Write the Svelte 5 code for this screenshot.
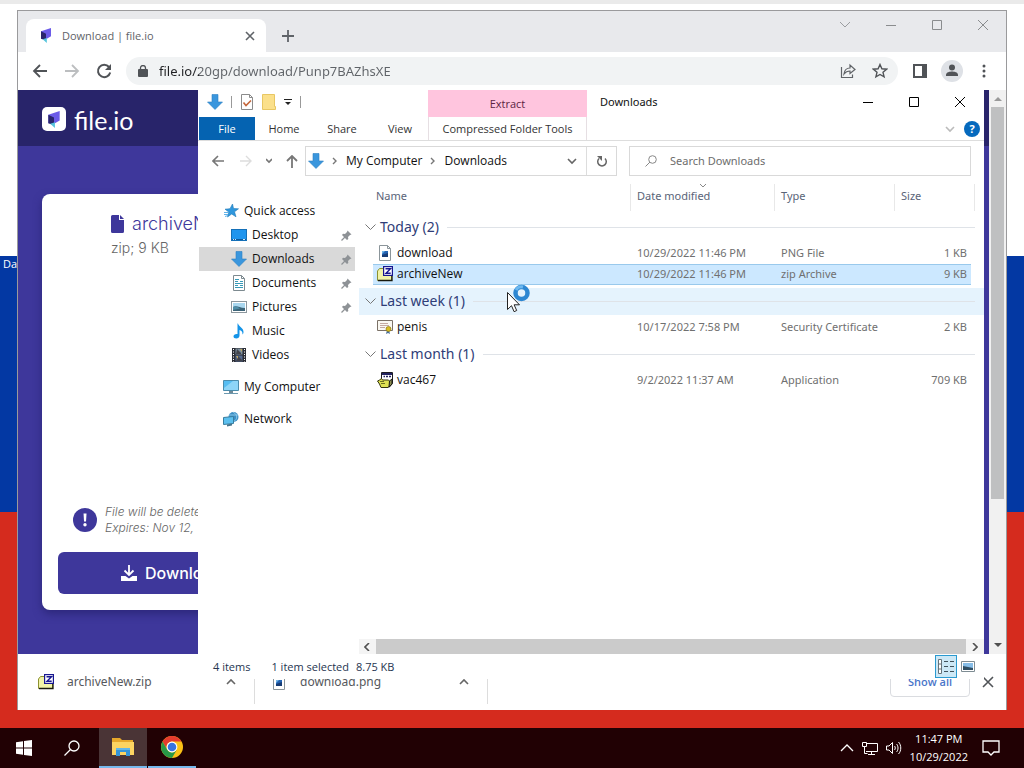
<script lang="ts">
    type FileRow = { name: string; icon: string; date: string; type: string; size: string; selected?: boolean };
    type Group = { title: string; hover?: boolean; files: FileRow[] };

    const groups: Group[] = [
        {
            title: 'Today (2)',
            files: [
                { name: 'download', icon: 'image', date: '10/29/2022 11:46 PM', type: 'PNG File', size: '1 KB' },
                { name: 'archiveNew', icon: 'zip', date: '10/29/2022 11:46 PM', type: 'zip Archive', size: '9 KB', selected: true },
            ],
        },
        {
            title: 'Last week (1)',
            hover: true,
            files: [{ name: 'penis', icon: 'cert', date: '10/17/2022 7:58 PM', type: 'Security Certificate', size: '2 KB' }],
        },
        {
            title: 'Last month (1)',
            files: [{ name: 'vac467', icon: 'app', date: '9/2/2022 11:37 AM', type: 'Application', size: '709 KB' }],
        },
    ];

    const quickLinks = [
        { name: 'Desktop', icon: 'desktop', pinned: true },
        { name: 'Downloads', icon: 'down', pinned: true, current: true },
        { name: 'Documents', icon: 'doc', pinned: true },
        { name: 'Pictures', icon: 'picture', pinned: true },
        { name: 'Music', icon: 'music' },
        { name: 'Videos', icon: 'video' },
    ];

    let url = $state('file.io/20gp/download/Punp7BAZhsXE');
    let search = $state('');
</script>

{#snippet icon(name: string)}
    <svg class="icon" width="16" height="16" viewBox="0 0 16 16" aria-hidden="true">
        {#if name === 'down'}
            <path d="M5 .5h6v7.500h4.500L8 15.500.5 8H5z" fill="#3a96dd" stroke="#2b7fc4" stroke-width=".6" />
        {:else if name === 'desktop'}
            <rect x=".5" y="2.500" width="15" height="11" fill="#1f95ee" stroke="#1470b8" />
            <path d="M1 12.500h14" stroke="#0b5a9c" /><path d="M2 12.500h1m1 0h1m7 0h2" stroke="#cdeaff" />
        {:else if name === 'doc'}
            <path d="M2.500.5h8l3 3v12h-11z" fill="#fff" stroke="#7d8a90" />
            <path d="M10.500.5v3h3" fill="none" stroke="#7d8a90" />
            <path d="M4 4.500h4M4 6.500h3m2 0h3M4 8.500h8M4 10.500h3m2 0h3M4 12.500h8" stroke="#389ab8" />
        {:else if name === 'picture'}
            <rect x=".5" y="2.500" width="15" height="11" fill="#fff" stroke="#8c979d" />
            <path d="M2 4h12v8H2z" fill="#a9d7ef" /><path d="M2 8c4-2 6 1 12 1v3H2z" fill="#3c6478" /><path d="M2 8c3-1 5 0 7 1.500L2 11z" fill="#4f8ea8" />
        {:else if name === 'music'}
            <path d="M7 .5c.5 3 6 4.500 5.500 9-.2 1-.5 1.500-1 2 .3-3-1.500-4-3-4.500v5.500c0 2-1.500 3-3.200 3S2.500 14.500 2.500 13.200 4 10.700 6.500 11V.5z" fill="#1494e8" />
        {:else if name === 'video'}
            <path d="M1 1h14v14H1z" fill="#2b2d35" /><path d="M4.500 1.500h7v6h-7z" fill="#7c8f9d" /><path d="M4.500 8.500h7v6h-7z" fill="#566b91" />
            <path d="M6 2l4 4v1H5zM7 9l4 4v1H5z" fill="#42434b" /><path d="M9 2h2v3zM5 9h2v3z" fill="#c4a860" />
            <path d="M2.500 2v13M13.500 2v13" stroke="#fff" stroke-dasharray="1 1.500" />
        {:else if name === 'star'}
            <path d="M9.500 1l1 4.500 5 .3-4 3 1.500 5L8.700 11l-4.200 3 1.300-5L2 6.200l5-.5z" fill="#2f97dd" stroke="#1e78b7" stroke-width=".6" />
            <path d="M1 9.500h4m-4 2h4m-3 2l3-1" stroke="#5fb2ea" />
        {:else if name === 'computer'}
            <path d="M.5 1.500h15v10H.5z" fill="#56bdf2" stroke="#4b8cac" /><path d="M1 9L10 2h5v9H1z" fill="#8dd5f8" />
            <path d="M6 12h4v2H6z" fill="#6e8996" /><path d="M1 14.500h14" stroke="#6c99b0" />
        {:else if name === 'network'}
            <circle cx="10.500" cy="6" r="5" fill="#3b8ec5" /><path d="M10 1c5 3 5 7 0 10M6 4h9" fill="none" stroke="#9dd6ef" stroke-width=".8" />
            <path d="M.5 6.500l10-1v7l-10 1z" fill="#5cc0ef" stroke="#387d9f" /><path d="M4 13.500l5-1v2l-5 1z" fill="#47758d" />
        {:else if name === 'image'}
            <path d="M2.500.5h8l3 3v12h-11z" fill="#fff" stroke="#8b959a" /><path d="M10.500.5v3h3" fill="none" stroke="#8b959a" />
            <path d="M5 6h6v6H5z" fill="#2464b4" /><path d="M5 10l6-2v4H5z" fill="#173c75" /><path d="M5 6h3L5 9z" fill="#73b6e6" />
        {:else if name === 'zip'}
            <path d="M.5 5l2-2.500h4l1 2h7v10H.5z" fill="#f1f4a8" stroke="#8d9130" /><path d="M1 14.500h14V9" fill="none" stroke="#17180c" stroke-width="1.300" />
            <rect x="6.600" y=".6" width="8.800" height="8.800" fill="#fff" stroke="#171790" stroke-width="1.200" />
            <path d="M8.500 2.700h5L9 7.300h4.700" fill="none" stroke="#171790" stroke-width="1.400" />
        {:else if name === 'cert'}
            <path d="M.5 1.500h15v10H.5z" fill="#faf8f2" stroke="#7b7167" /><path d="M3 4.500h8M3 6.500h9M3 8.500h5" stroke="#c5aaa2" />
            <path d="M10 11l-1 4 2-1 2 1-1-4z" fill="#486d98" /><circle cx="11.500" cy="10" r="2.500" fill="#d8bd21" stroke="#8f7912" stroke-width=".7" />
        {:else if name === 'app'}
            <path d="M4.500.5h11v11l-3 3.500h-8z" fill="#fff" stroke="#1c1c22" /><path d="M5 1h10v2H5z" fill="#22225f" />
            <path d="M6.500 4.500h1.500m1 0h2m1 0h2" stroke="#22225f" stroke-width="1.400" />
            <path d="M.5 9l2-1 2-1.500 1 1.500h6l1 1v5l-1.500 1.500h-7L2.500 12z" fill="#dfe253" stroke="#34350e" />
            <path d="M3 9.500h4m-3 2h4" stroke="#6c6e20" /><path d="M12.500 9l2.500-2v5l-3 3z" fill="#8a8c50" stroke="#1c1c12" />
        {/if}
    </svg>
{/snippet}

{#snippet chevron(dir: string)}
    <svg class="chev {dir}" width="10" height="10" viewBox="0 0 10 10" aria-hidden="true"><path d="M1 3l4 4 4-4" /></svg>
{/snippet}

{#snippet logo()}
    <svg class="logo" viewBox="0 0 14 18" aria-hidden="true">
        <path d="M1 4l12-4v10L8 13H1z" fill="#6b5be8" /><path d="M1 4l6 3v8l-6-2z" fill="#29256c" /><path d="M3 13.500l5-1.500v6z" fill="#56c4dc" />
    </svg>
{/snippet}

<div class="screen">
    <div class="desktop">
        <div class="stripe white"></div>
        <div class="stripe blue"><span class="shortcut">Da</span></div>
        <div class="stripe red"></div>

        <section class="browser" aria-label="Browser">
            <div class="tabstrip">
                <div class="tab">
                    {@render logo()}
                    <span class="tab-title">Download | file.io</span>
                    <button class="plain" aria-label="Close tab"><svg width="10" height="10" viewBox="0 0 10 10"><path d="M1 1l8 8M9 1L1 9" stroke="#5f6368" stroke-width="1.600" /></svg></button>
                </div>
                <button class="plain new-tab" aria-label="New tab"><svg width="12" height="12" viewBox="0 0 12 12"><path d="M6 0v12M0 6h12" stroke="#5f6368" stroke-width="1.800" /></svg></button>
                <div class="controls">
                    <button class="plain" aria-label="Search tabs"><svg width="12" height="12" viewBox="0 0 12 12"><path d="M1 3l5 5 5-5" fill="none" stroke="#9b9da0" /></svg></button>
                    <button class="plain" aria-label="Minimize"><svg width="12" height="12" viewBox="0 0 12 12"><path d="M1 6.500h10" stroke="#8a8c8e" /></svg></button>
                    <button class="plain" aria-label="Maximize"><svg width="12" height="12" viewBox="0 0 12 12"><path d="M1.500 1.500h9v9h-9z" fill="none" stroke="#8a8c8e" /></svg></button>
                    <button class="plain" aria-label="Close"><svg width="12" height="12" viewBox="0 0 12 12"><path d="M1 1l10 10M11 1L1 11" stroke="#8a8c8e" /></svg></button>
                </div>
            </div>

            <div class="toolbar">
                <button class="plain" aria-label="Back"><svg width="16" height="16" viewBox="0 0 16 16"><path d="M15 8H2m6-6L2 8l6 6" fill="none" stroke="#505357" stroke-width="1.800" /></svg></button>
                <button class="plain" aria-label="Forward"><svg width="16" height="16" viewBox="0 0 16 16"><path d="M1 8h13M8 2l6 6-6 6" fill="none" stroke="#bcbec0" stroke-width="1.800" /></svg></button>
                <button class="plain" aria-label="Reload"><svg width="16" height="16" viewBox="0 0 16 16"><path d="M13 4a6.200 6.200 0 1 0 1.200 5.500" fill="none" stroke="#505357" stroke-width="2" /><path d="M15 1v6H9z" fill="#505357" /></svg></button>
                <label class="omnibox">
                    <svg width="10" height="12" viewBox="0 0 10 12" aria-hidden="true"><rect y="4" width="10" height="8" rx="1" fill="#505357" /><path d="M2.500 5V3a2.500 2.500 0 0 1 5 0v2" fill="none" stroke="#505357" stroke-width="1.300" /></svg>
                    <input aria-label="Address" bind:value={url} />
                    <svg width="16" height="16" viewBox="0 0 16 16" aria-hidden="true"><path d="M1.500 4v10.500h11v-3M4 11c.5-4 3-6 6-6V2l5 4.500-5 4V8c-3 0-4.500 1-6 3z" fill="none" stroke="#606367" stroke-width="1.200" /></svg>
                    <svg width="16" height="16" viewBox="0 0 16 16" aria-hidden="true"><path d="M8 1.500l1.900 4.300 4.700.4-3.600 3.100 1.100 4.600L8 11.500l-4.100 2.400L5 9.300 1.400 6.200l4.700-.4z" fill="none" stroke="#505357" stroke-width="1.400" /></svg>
                </label>
                <button class="plain" aria-label="Side panel"><svg width="16" height="16" viewBox="0 0 16 16"><path d="M2 2h12v12H2z" fill="none" stroke="#505357" stroke-width="2" /><path d="M10 2h5v12h-5z" fill="#505357" /></svg></button>
                <button class="plain profile" aria-label="Profile"><svg width="22" height="22" viewBox="0 0 22 22"><circle cx="11" cy="11" r="11" fill="#dee1e6" /><circle cx="11" cy="7.500" r="3" fill="#505357" /><path d="M5 16v-1c0-3 4-3.500 6-3.500s6 .5 6 3.500v1z" fill="#505357" /></svg></button>
                <button class="plain" aria-label="Menu"><svg width="16" height="16" viewBox="0 0 16 16"><g fill="#505357"><circle cx="8" cy="3" r="1.500" /><circle cx="8" cy="8" r="1.500" /><circle cx="8" cy="13" r="1.500" /></g></svg></button>
            </div>

            <div class="viewport">
                <main class="page">
                    <header class="page-head">
                        <span class="badge">{@render logo()}</span>
                        <span class="brand">file.io</span>
                    </header>
                    <div class="card">
                        <div class="file-info">
                            <svg width="13" height="18" viewBox="0 0 13 18" aria-hidden="true"><path d="M1.500 0H8v5h5v11.500a1.500 1.500 0 0 1-1.500 1.500h-10A1.500 1.500 0 0 1 0 16.500v-15A1.500 1.500 0 0 1 1.500 0zM9 0l4 4H9z" fill="#3e379b" /></svg>
                            <span class="file-name">archiveNew</span>
                            <span class="file-meta">zip; 9 KB</span>
                        </div>
                        <div class="notice">
                            <svg width="24" height="24" viewBox="0 0 24 24" aria-hidden="true"><circle cx="12" cy="12" r="12" fill="#3e379b" /><path d="M10.500 5.500h3l-.5 8h-2z" fill="#fff" /><circle cx="12" cy="16.800" r="1.700" fill="#fff" /></svg>
                            <p>File will be deleted<br />Expires: Nov 12,</p>
                        </div>
                        <button class="download">
                            <svg width="16" height="16" viewBox="0 0 16 16" aria-hidden="true"><path d="M8 0v10M3.500 5.500L8 10l4.500-4.500" fill="none" stroke="#fff" stroke-width="1.800" /><path d="M0 11h4.500L8 13.500l3.500-2.500H16v5H0z" fill="#fff" /></svg>
                            Download
                        </button>
                    </div>
                </main>
                <div class="vscroll">
                    <svg width="8" height="6" viewBox="0 0 8 6" aria-hidden="true"><path d="M0 5l4-4 4 4z" fill="#9a9a9a" /></svg>
                    <div class="track"><div class="thumb"></div></div>
                    <svg width="8" height="6" viewBox="0 0 8 6" aria-hidden="true"><path d="M0 1l4 4 4-4z" fill="#505050" /></svg>
                </div>
            </div>

            <footer class="shelf">
                <div class="item">{@render icon('zip')}<span>archiveNew.zip</span><button class="plain" aria-label="Options">{@render chevron('up')}</button></div>
                <div class="item">{@render icon('image')}<span>download.png</span><button class="plain" aria-label="Options">{@render chevron('up')}</button></div>
                <button class="show-all">Show all</button>
                <button class="plain" aria-label="Close downloads"><svg width="12" height="12" viewBox="0 0 12 12"><path d="M1 1l10 10M11 1L1 11" stroke="#505357" stroke-width="1.600" /></svg></button>
            </footer>
        </section>

        <section class="explorer" aria-label="Downloads">
            <div class="titlebar">
                <div class="quick">
                    {@render icon('down')}
                    <i class="sep"></i>
                    <svg width="14" height="16" viewBox="0 0 14 16" aria-hidden="true"><path d="M1.500.5h8l3 3v12h-11z" fill="#fff" stroke="#8b8b8b" /><path d="M9.500.5v3h3" fill="none" stroke="#8b8b8b" /><path d="M3.500 8.500l2.500 3 5-5" fill="none" stroke="#c5663a" stroke-width="1.600" /></svg>
                    <svg width="14" height="16" viewBox="0 0 14 16" aria-hidden="true"><path d="M.5.5h12v12h1v3H.5z" fill="#fbe08b" stroke="#e8c763" /></svg>
                    <svg width="8" height="8" viewBox="0 0 8 8" aria-hidden="true"><path d="M0 1.500h8" stroke="#222" /><path d="M1 4h6L4 7z" fill="#222" /></svg>
                    <i class="sep"></i>
                </div>
                <div class="context">Extract</div>
                <h1>Downloads</h1>
                <div class="controls">
                    <button class="plain" aria-label="Minimize"><svg width="12" height="12" viewBox="0 0 12 12"><path d="M1 6.500h10" stroke="#000" /></svg></button>
                    <button class="plain" aria-label="Maximize"><svg width="12" height="12" viewBox="0 0 12 12"><path d="M1.500 1.500h9v9h-9z" fill="none" stroke="#000" /></svg></button>
                    <button class="plain" aria-label="Close"><svg width="12" height="12" viewBox="0 0 12 12"><path d="M1 1l10 10M11 1L1 11" stroke="#000" /></svg></button>
                </div>
            </div>

            <nav class="ribbon">
                <button class="file">File</button>
                <button>Home</button>
                <button>Share</button>
                <button>View</button>
                <button class="tools">Compressed Folder Tools</button>
                <span class="ribbon-end">
                    {@render chevron('down pale')}
                    <button class="help" aria-label="Help">?</button>
                </span>
            </nav>

            <div class="navbar">
                <div class="arrows">
                    <button class="plain" aria-label="Back"><svg width="13" height="12" viewBox="0 0 13 12"><path d="M12 6H1m5-5L1 6l5 5" fill="none" stroke="#777" stroke-width="1.600" /></svg></button>
                    <button class="plain" aria-label="Forward"><svg width="13" height="12" viewBox="0 0 13 12"><path d="M1 6h11M7 1l5 5-5 5" fill="none" stroke="#ddd" stroke-width="1.400" /></svg></button>
                    <button class="plain" aria-label="Recent"><svg width="6" height="6" viewBox="0 0 6 6"><path d="M0 1l3 3 3-3" fill="none" stroke="#777" stroke-width="1.600" /></svg></button>
                    <button class="plain" aria-label="Up"><svg width="12" height="13" viewBox="0 0 12 13"><path d="M6 13V1M1 6l5-5 5 5" fill="none" stroke="#777" stroke-width="1.800" /></svg></button>
                </div>
                <div class="address">
                    {@render icon('down')}
                    <svg width="6" height="8" viewBox="0 0 6 8" aria-hidden="true"><path d="M1 1l3 3-3 3" fill="none" stroke="#777" stroke-width="1.400" /></svg>
                    <a href="#computer">My Computer</a>
                    <svg width="6" height="8" viewBox="0 0 6 8" aria-hidden="true"><path d="M1 1l3 3-3 3" fill="none" stroke="#777" stroke-width="1.400" /></svg>
                    <a href="#downloads">Downloads</a>
                    <button class="plain expand" aria-label="Previous locations">{@render chevron('down')}</button>
                    <button class="plain refresh" aria-label="Refresh"><svg width="12" height="12" viewBox="0 0 12 12"><path d="M3 3.500a4.300 4.300 0 1 0 6 0" fill="none" stroke="#666" stroke-width="1.500" /><path d="M1 1h5v5z" fill="#666" /></svg></button>
                </div>
                <label class="search">
                    <svg width="12" height="12" viewBox="0 0 12 12" aria-hidden="true"><circle cx="7.500" cy="4.500" r="3.800" fill="none" stroke="#888" /><path d="M5 7L.5 11.500" stroke="#888" /></svg>
                    <input aria-label="Search" placeholder="Search Downloads" bind:value={search} />
                </label>
            </div>

            <div class="body">
                <nav class="tree">
                    <a class="root" href="#quick">{@render icon('star')}Quick access</a>
                    {#each quickLinks as link (link.name)}
                        <a href="#{link.icon}" class:current={link.current}>
                            {@render icon(link.icon)}{link.name}
                            {#if link.pinned}
                                <svg class="pin" width="11" height="11" viewBox="0 0 11 11" aria-hidden="true"><path d="M6.500.5l4 4-1.500.5-2 2 .3 2L6 10 1 5l1-1.300 2 .3 2-2z" fill="#8e9296" /><path d="M4 7L.5 10.500" stroke="#8e9296" stroke-width="1.200" /></svg>
                            {/if}
                        </a>
                    {/each}
                    <a class="root spaced" href="#computer">{@render icon('computer')}My Computer</a>
                    <a class="root spaced" href="#network">{@render icon('network')}Network</a>
                </nav>

                <div class="pane">
                    <table>
                        <colgroup><col class="c-gutter" /><col /><col class="c-date" /><col class="c-type" /><col class="c-size" /><col class="c-tail" /></colgroup>
                        <thead>
                            <tr>
                                <td></td>
                                <th class="th-name">Name</th>
                                <th class="sorted">Date modified<svg width="8" height="5" viewBox="0 0 8 5" aria-hidden="true"><path d="M1 0l3 3 3-3" fill="none" stroke="#888" /></svg></th>
                                <th>Type</th>
                                <th>Size</th>
                                <td class="tail"></td>
                            </tr>
                        </thead>
                        {#each groups as group (group.title)}
                            <tbody>
                                <tr class="group">
                                    <td colspan="6">
                                        <button class:hover={group.hover}>
                                            <svg width="11" height="7" viewBox="0 0 11 7" aria-hidden="true"><path d="M.5.5l5 5 5-5" fill="none" stroke="#777" /></svg>
                                            <span>{group.title}</span>
                                            <i></i>
                                        </button>
                                    </td>
                                </tr>
                                {#each group.files as file (file.name)}
                                    <tr class="file-row" class:selected={file.selected}>
                                        <td></td>
                                        <td class="name"><span>{@render icon(file.icon)}{file.name}</span></td>
                                        <td>{file.date}</td>
                                        <td>{file.type}</td>
                                        <td class="size">{file.size}</td>
                                        <td></td>
                                    </tr>
                                {/each}
                            </tbody>
                        {/each}
                    </table>
                    <div class="hscroll">
                        <svg width="6" height="8" viewBox="0 0 6 8" aria-hidden="true"><path d="M5 0L1 4l4 4" fill="none" stroke="#505050" stroke-width="1.600" /></svg>
                        <div></div>
                        <svg width="6" height="8" viewBox="0 0 6 8" aria-hidden="true"><path d="M1 0l4 4-4 4" fill="none" stroke="#505050" stroke-width="1.600" /></svg>
                    </div>
                </div>
            </div>

            <div class="status">
                <span class="count">4 items</span>
                <span>1 item selected</span>
                <span>8.75 KB</span>
                <button class="view active" aria-label="Details"><svg width="18" height="15" viewBox="0 0 18 15"><path d="M1.500.5h3v14h-3zM1.500 5h3m-3 5h3" fill="#fff" stroke="#66737a" /><path d="M7 2.500h4m2 0h4M7 7.500h4m2 0h4M7 12.500h4m2 0h4" stroke="#41525b" /></svg></button>
                <button class="view" aria-label="Large icons"><svg width="14" height="11" viewBox="0 0 14 11"><path d="M.5.5h13v10H.5z" fill="#fff" stroke="#7e8c93" /><path d="M2 2h10v7H2z" fill="#86bde8" /><path d="M2 5l10 2v2H2z" fill="#2f4e63" /></svg></button>
            </div>
        </section>

        <svg class="pointer" width="26" height="30" viewBox="0 0 26 30" aria-hidden="true">
            <circle cx="15.500" cy="9" r="6" fill="none" stroke="#2d87d2" stroke-width="4.500" /><path d="M10 6a6 6 0 0 1 7-3" fill="none" stroke="#6db8ef" stroke-width="3" />
            <path d="M1.500 8.500v17l4-3.800 2.600 6 2.600-1.200-2.600-5.700h5.400z" fill="#fff" stroke="#222" />
        </svg>
    </div>

    <footer class="taskbar">
        <button aria-label="Start"><svg width="16" height="16" viewBox="0 0 16 16"><path d="M0 2.300L7 1.300v6.300H0zM8 1.100L16 0v7.600H8zM0 8.500h7v6.300l-7-1zM8 8.500h8V16l-8-1.100z" fill="#fff" /></svg></button>
        <button aria-label="Search"><svg width="16" height="16" viewBox="0 0 16 16"><circle cx="10" cy="6" r="5" fill="none" stroke="#fff" stroke-width="1.300" /><path d="M6.500 9.500L.5 15.500" stroke="#fff" stroke-width="1.300" /></svg></button>
        <button class="open focused" aria-label="File Explorer"><svg width="22" height="20" viewBox="0 0 22 20"><path d="M0 1h8l2 2h11v4H0z" fill="#e7a82b" /><path d="M0 5h22v13H0z" fill="#fcd462" /><path d="M4 19v-8h14v8h-4v-4H8v4z" fill="#3595d8" /><path d="M4 11h14v2H4z" fill="#62b7e8" /></svg></button>
        <button class="open" aria-label="Chrome">
            <svg width="22" height="22" viewBox="0 0 22 22">
                <circle cx="11" cy="11" r="11" fill="#fbc116" /><path d="M1.500 5.500A11 11 0 0 1 20.500 5.500H11A5.500 5.500 0 0 0 6.200 13.800z" fill="#e33b2e" />
                <path d="M1.500 5.500L6.200 13.800A5.500 5.500 0 0 0 15.800 13.800L11 22A11 11 0 0 1 1.500 5.500z" fill="#279847" />
                <circle cx="11" cy="11" r="5.400" fill="#fff" /><circle cx="11" cy="11" r="4.300" fill="#3873e0" />
            </svg>
        </button>
        <div class="tray">
            <svg width="14" height="8" viewBox="0 0 14 8" aria-hidden="true"><path d="M1 7l6-6 6 6" fill="none" stroke="#fff" stroke-width="1.300" /></svg>
            <svg width="16" height="15" viewBox="0 0 16 15" aria-hidden="true"><path d="M5 2.500h10.500v8H4M9.500 10.500v3M6 13.500h7M.5 1.500h4v4h-4zM2.500 5.500v7h3" fill="none" stroke="#fff" /></svg>
            <svg width="16" height="14" viewBox="0 0 16 14" aria-hidden="true"><path d="M.5 5v4h2.500l3.500 3.500v-11L3 5zM8.500 5c1 1 1 3 0 4M10.500 3c2 2 2 6 0 8M12.500 1c3 3 3 9 0 12" fill="none" stroke="#fff" /></svg>
            <time>11:47 PM<br />10/29/2022</time>
            <svg width="18" height="18" viewBox="0 0 18 18" aria-hidden="true"><path d="M1 2h16v11h-5l-3 3-3-3H1z" fill="none" stroke="#fff" stroke-width="1.300" /></svg>
        </div>
    </footer>
</div>

<style>
    :global(body) {
        margin: 0;
        overflow: hidden;
    }

    .screen {
        --ui: 'Open Sans', 'Noto Sans', sans-serif;
        --ui-wide: 'Noto Sans', 'Open Sans', sans-serif;
        --purple: #3e379b;
        display: flex;
        flex-direction: column;
        height: 100vh;
        font-family: var(--ui);
        font-size: 12px;
        line-height: 16px;
        color: #111;
    }

    .screen * {
        box-sizing: border-box;
    }

    button,
    input {
        font: inherit;
        color: inherit;
        border: 0;
        padding: 0;
        margin: 0;
        background: none;
    }

    input {
        outline: 0;
        min-width: 0;
    }

    a {
        color: inherit;
        text-decoration: none;
    }

    svg {
        display: block;
        flex: none;
    }

    .plain {
        display: flex;
        align-items: center;
        justify-content: center;
    }

    .chev path {
        fill: none;
        stroke: #666;
        stroke-width: 1.6;
    }

    .chev.up {
        transform: rotate(180deg);
    }

    .chev.pale path {
        stroke: #bbb;
    }

    /* the flag wallpaper */
    .desktop {
        position: relative;
        flex: 1;
        display: flex;
        flex-direction: column;
        overflow: hidden;
    }

    .stripe.white {
        flex: 256;
        background: #fff;
        box-shadow: inset 0 4px #eaeaea;
    }

    .stripe.blue {
        flex: 256;
        background: #0338a3;
    }

    .stripe.red {
        flex: 216;
        background: #d52b1e;
    }

    .shortcut {
        display: block;
        padding-left: 3px;
        font-size: 11px;
        color: #fff;
    }

    .browser {
        position: absolute;
        inset: 10px 17px 18px 17px;
        display: flex;
        flex-direction: column;
        background: #fff;
        border: 1px solid #9a9a9c;
        border-bottom: 0;
    }

    .tabstrip {
        display: flex;
        height: 41px;
        padding-left: 8px;
        background: #e8e9ec;
    }

    .tab {
        display: flex;
        align-items: center;
        gap: 10px;
        width: 240px;
        margin-top: 8px;
        padding: 0 11px 0 14px;
        background: #fff;
        border-radius: 8px 8px 0 0;
        color: #5f6368;
    }

    .tab .logo {
        width: 12px;
        height: 15px;
    }

    .tab-title {
        flex: 1;
        font-size: 11px;
    }

    .new-tab {
        width: 44px;
        padding-top: 8px;
    }

    .controls {
        display: flex;
        align-items: center;
        height: 28px;
        margin-left: auto;
    }

    .controls .plain {
        width: 46px;
    }

    .toolbar {
        display: flex;
        align-items: center;
        gap: 16px;
        height: 38px;
        padding: 0 14px;
    }

    .omnibox {
        flex: 1;
        display: flex;
        align-items: center;
        gap: 16px;
        height: 28px;
        margin: 0 -2px;
        padding: 0 10px 0 12px;
        border-radius: 14px;
        background: #f1f3f4;
    }

    .omnibox input {
        flex: 1;
        margin-left: -5px;
        font-family: var(--ui-wide);
        font-size: 13px;
        background: linear-gradient(90deg, #202124 40px, #5f6368 40px);
        background-clip: text;
        color: transparent;
    }

    .profile {
        margin: 0 -3px;
    }

    .viewport {
        flex: 1;
        display: flex;
        min-height: 0;
    }

    .page {
        flex: 1;
        display: flex;
        flex-direction: column;
        background: var(--purple);
        font-family: Inter, sans-serif;
    }

    .page-head {
        display: flex;
        align-items: center;
        gap: 8px;
        height: 56px;
        padding: 2px 24px 0;
        background: #28246a;
        color: #fff;
    }

    .badge {
        display: grid;
        place-items: center;
        width: 24px;
        height: 24px;
        border-radius: 5px;
        background: #fff;
    }

    .badge .logo {
        width: 14px;
        height: 17px;
    }

    .brand {
        padding-top: 2px;
        font-family: Lato, sans-serif;
        font-size: 25px;
        line-height: 28px;
    }

    .card {
        flex: 1;
        display: flex;
        flex-direction: column;
        margin: 48px 24px 44px;
        padding: 16px;
        border-radius: 8px;
        background: #fff;
        box-shadow: 0 4px 8px #2d287c;
    }

    .file-info {
        display: grid;
        grid-template-columns: 13px 1fr;
        column-gap: 8px;
        align-items: center;
        padding: 2px 53px;
    }

    .file-name {
        font-size: 18px;
        font-weight: 300;
        line-height: 24px;
        color: var(--purple);
    }

    .file-meta {
        grid-column: 1 / 3;
        font-size: 14px;
        font-weight: 300;
        line-height: 24px;
        color: #666;
    }

    .notice {
        display: flex;
        align-items: center;
        gap: 8px;
        margin-top: auto;
        padding: 0 15px 16px;
        font-style: italic;
        font-weight: 300;
        color: #666;
    }

    .notice p {
        margin: 0;
    }

    .download {
        display: flex;
        align-items: center;
        gap: 8px;
        height: 42px;
        padding: 0 63px;
        border-radius: 6px;
        background: var(--purple);
        color: #fff;
        font-size: 16px;
        font-weight: 500;
    }

    .vscroll {
        display: flex;
        flex-direction: column;
        align-items: center;
        width: 17px;
        padding: 6px 1px;
        background: #f1f1f1;
    }

    .track {
        flex: 1;
        width: 100%;
        padding: 5px 1px;
    }

    .thumb {
        height: 74%;
        background: #bfc0c1;
    }

    .shelf {
        display: flex;
        align-items: center;
        height: 56px;
        padding-right: 12px;
        color: #55585c;
    }

    .item {
        display: flex;
        align-items: center;
        gap: 13px;
        width: 233px;
        height: 44px;
        padding: 0 14px 0 16px;
        border-right: 1px solid #ddd;
        font-family: var(--ui-wide);
    }

    .item:first-child {
        width: 237px;
        padding-left: 20px;
    }

    .item .plain {
        width: 18px;
        margin-left: auto;
    }

    .show-all {
        width: 80px;
        height: 30px;
        margin: 0 12px 0 auto;
        border: 1px solid #dadce0;
        border-radius: 4px;
        font-size: 11px;
        font-weight: 600;
        color: #4a76c9;
    }

    .explorer {
        position: absolute;
        inset: 90px 40px 49px 198px;
        display: flex;
        flex-direction: column;
        background: #fff;
    }

    .titlebar {
        display: flex;
        height: 27px;
    }

    .quick {
        display: flex;
        align-items: center;
        gap: 8px;
        width: 230px;
        padding: 0 9px 4px;
    }

    .sep {
        width: 1px;
        height: 12px;
        background: #999;
    }

    .context {
        width: 159px;
        background: #ffc5de;
        color: #5c2442;
        font-size: 11px;
        line-height: 28px;
        text-align: center;
    }

    h1 {
        margin: 0;
        padding-left: 13px;
        font-family: var(--ui-wide);
        font-size: 11px;
        font-weight: 400;
        line-height: 24px;
    }

    .explorer .controls {
        height: 23px;
        padding-right: 1px;
    }

    .ribbon {
        display: flex;
        height: 24px;
        font-size: 11px;
        color: #333;
        border-bottom: 1px solid #ddd;
    }

    .ribbon > button {
        width: 58px;
    }

    .ribbon .file {
        width: 56px;
        margin-left: 1px;
        background: #0563b1;
        color: #fff;
    }

    .ribbon .tools {
        width: 159px;
        margin-left: -1px;
        border: solid #e6dfe3;
        border-width: 0 1px;
    }

    .ribbon-end {
        display: flex;
        align-items: center;
        gap: 9px;
        margin-left: auto;
        padding-right: 4px;
    }

    .help {
        width: 16px;
        height: 16px;
        border-radius: 50%;
        background: #0569bd;
        color: #fff;
        font-weight: 700;
    }

    .navbar {
        display: flex;
        gap: 12px;
        padding: 5px 13px 0 0;
    }

    .arrows {
        display: flex;
        align-items: center;
        justify-content: space-between;
        width: 100px;
        margin-right: -5px;
        padding-left: 14px;
    }

    .address {
        flex: 1 1 312px;
        display: flex;
        align-items: center;
        gap: 8px;
        height: 30px;
        padding-left: 2px;
        border: 1px solid #d9d9d9;
    }

    .search {
        flex: 1 1 342px;
        display: flex;
        align-items: center;
        gap: 13px;
        padding: 0 15px;
        border: 1px solid #d9d9d9;
    }

    .search input {
        flex: 1;
        font-family: var(--ui-wide);
        font-size: 11px;
    }

    .search input::placeholder {
        color: #6d6d6d;
        opacity: 1;
    }

    .expand {
        width: 28px;
        margin-left: auto;
    }

    .refresh {
        width: 30px;
        height: 28px;
        margin-left: -8px;
        border-left: 1px solid #ddd;
    }

    .body {
        flex: 1;
        display: flex;
        min-height: 0;
    }

    .tree {
        width: 157px;
        margin-right: 4px;
        padding-top: 23px;
    }

    .tree a {
        display: flex;
        align-items: center;
        gap: 5px;
        height: 24px;
        margin-left: 1px;
        padding: 0 3px 0 32px;
    }

    .tree .root {
        padding-left: 24px;
    }

    .tree .spaced {
        margin-top: 8px;
    }

    .tree .current {
        background: #d9d9d9;
    }

    .pin {
        margin-left: auto;
    }

    .pane {
        flex: 1;
        display: flex;
        flex-direction: column;
    }

    table {
        width: 100%;
        table-layout: fixed;
        border-spacing: 0;
        margin-top: 8px;
    }

    .c-gutter {
        width: 14px;
    }

    .c-date {
        width: 144px;
    }

    .c-type {
        width: 120px;
    }

    .c-size {
        width: 77px;
    }

    .c-tail {
        width: 13px;
    }

    td,
    th {
        padding: 0 0 0 7px;
        font-weight: 400;
        text-align: left;
    }

    thead tr {
        height: 27px;
    }

    th {
        position: relative;
        color: #5a6478;
        border-left: 1px solid #e8e8e8;
        padding: 0 0 3px 6px;
        font-family: var(--ui-wide);
        font-size: 11px;
    }

    .th-name {
        border: 0;
        padding-left: 3px;
    }

    .sorted svg {
        position: absolute;
        top: 0;
        left: 68px;
    }

    .tail {
        background: linear-gradient(#e8e8e8, #e8e8e8) 3px 0 / 1px 100% no-repeat;
    }

    .group td {
        height: 32px;
        padding: 0;
    }

    .group button {
        display: flex;
        align-items: center;
        gap: 4px;
        width: 100%;
        height: 27px;
        padding: 0 9px 0 6px;
        font-family: var(--ui-wide);
        font-size: 14px;
        color: #2f3d78;
    }

    .group .hover {
        background: #e5f3fd;
    }

    .group i {
        flex: 1;
        height: 1px;
        margin-left: 4px;
        background: #dfe3e8;
    }

    .file-row td {
        height: 21px;
        padding-bottom: 2px;
        font-family: var(--ui-wide);
        font-size: 11px;
        color: #707070;
        white-space: nowrap;
    }

    .file-row .name {
        padding-left: 4px;
        font-family: var(--ui);
        font-size: 12px;
        color: #111;
    }

    .name span {
        display: flex;
        align-items: center;
        gap: 4px;
    }

    .file-row .size {
        padding-right: 4px;
        text-align: right;
    }

    .selected td:not(:first-child):not(:last-child) {
        background: #cce8ff;
        box-shadow: inset 0 1px #99c9ec, inset 0 -1px #99c9ec;
    }

    .hscroll {
        display: flex;
        align-items: center;
        gap: 6px;
        height: 15px;
        margin-top: auto;
        padding: 0 6px 0 5px;
        background: #f4f4f4;
    }

    .hscroll div {
        flex: 1;
        height: 100%;
        background: #cbcbcb;
    }

    .status {
        display: flex;
        align-items: center;
        gap: 7px;
        height: 25px;
        padding: 0 8px 0 15px;
        font-size: 11px;
        color: #263550;
    }

    .count {
        margin-right: 14px;
    }

    .view {
        display: grid;
        place-items: center;
        height: 23px;
        padding: 0 1px;
    }

    .view.active {
        margin-left: auto;
        margin-right: -4px;
        background: #cce8f6;
        border: 1px solid #2a9ad0;
    }

    .pointer {
        position: absolute;
        left: 506px;
        top: 284px;
    }

    .taskbar {
        display: flex;
        height: 40px;
        background: #210104;
        color: #fff;
    }

    .taskbar button {
        display: grid;
        place-items: center;
        width: 48px;
    }

    .taskbar .open {
        border-bottom: 2px solid #76b9ed;
        padding: 0 4px;
    }

    .taskbar .focused {
        background: #4a3436;
        margin: 0 1px 0 3px;
    }

    .tray {
        display: flex;
        align-items: center;
        gap: 8px;
        margin-left: auto;
        padding-right: 24px;
    }

    time {
        margin-right: 6px;
        font-size: 11px;
        line-height: 18px;
        text-align: center;
    }
</style>
